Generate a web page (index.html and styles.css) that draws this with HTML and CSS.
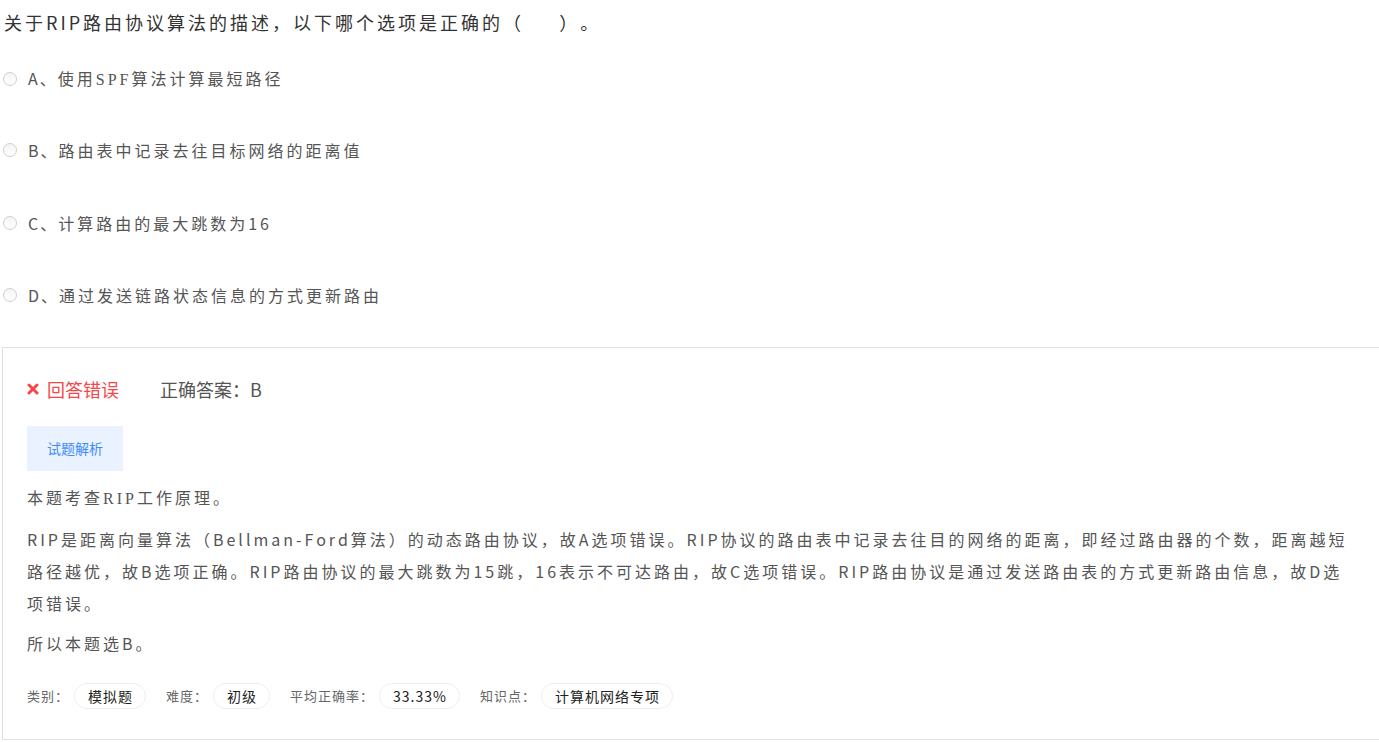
FILE: index.html
```html
<!DOCTYPE html>
<html lang="zh-CN">
<head>
    <meta charset="UTF-8">
    <meta name="viewport" content="width=device-width, initial-scale=1.0">
    <title>试题详情</title>
    <link rel="stylesheet" href="styles.css">
</head>
<body>
    <div class="page">
        <div class="question">关于RIP路由协议算法的描述，以下哪个选项是正确的（&nbsp;&nbsp;&nbsp;&nbsp;&nbsp;）。</div>

        <ul class="options">
            <li class="option"><span class="radio"></span><span class="option-text"><span class="option-key">A、</span>使用<span class="serif">SPF</span>算法计算最短路径</span></li>
            <li class="option"><span class="radio"></span><span class="option-text"><span class="option-key">B、</span>路由表中记录去往目标网络的距离值</span></li>
            <li class="option"><span class="radio"></span><span class="option-text"><span class="option-key">C、</span>计算路由的最大跳数为16</span></li>
            <li class="option"><span class="radio"></span><span class="option-text"><span class="option-key">D、</span>通过发送链路状态信息的方式更新路由</span></li>
        </ul>

        <div class="panel">
            <div class="result">
                <span class="wrong">
                    <svg class="wrong-icon" width="12" height="12" viewBox="0 0 12 12">
                        <path d="M2 2 L10 10 M10 2 L2 10" stroke="#f5474a" stroke-width="3" stroke-linecap="round"/>
                    </svg>
                    回答错误
                </span>
                <span class="answer">正确答案：B</span>
            </div>

            <div class="tabs">
                <span class="tab">试题解析</span>
            </div>

            <div class="analysis">
                <p>本题考查<span class="serif">RIP</span>工作原理。</p>
                <p>RIP是距离向量算法（Bellman-Ford算法）的动态路由协议，故A选项错误。RIP协议的路由表中记录去往目的网络的距离，即经过路由器的个数，距离越短路径越优，故B选项正确。RIP路由协议的最大跳数为15跳，16表示不可达路由，故C选项错误。RIP路由协议是通过发送路由表的方式更新路由信息，故D选项错误。</p>
                <p>所以本题选B。</p>
            </div>

            <div class="meta">
                <span class="meta-label">类别：</span><span class="pill">模拟题</span>
                <span class="meta-label">难度：</span><span class="pill">初级</span>
                <span class="meta-label">平均正确率：</span><span class="pill">33.33%</span>
                <span class="meta-label">知识点：</span><span class="pill">计算机网络专项</span>
            </div>
        </div>
    </div>
</body>
</html>
```

FILE: styles.css
```css
html, body {
    margin: 0;
    padding: 0;
    background-color: #FFFFFF;
}

body {
    font-family: "Noto Sans CJK SC", "Noto Sans", sans-serif;
    color: #555555;
    text-spacing-trim: space-all;
}

.page {
    padding-left: 2px;
}

.serif {
    font-family: "Liberation Serif", "Noto Sans CJK SC", serif;
}

.question {
    height: 44px;
    line-height: 44px;
    padding-left: 2px;
    font-size: 18px;
    letter-spacing: 3px;
    color: #333333;
}

.options {
    list-style: none;
    margin: 0;
    padding: 0;
}

.option {
    height: 72.5px;
    display: flex;
    align-items: center;
    box-sizing: border-box;
}

.option:first-child {
    height: 70px;
}

.radio {
    width: 12px;
    height: 12px;
    border: 1px solid #cfcfcf;
    border-radius: 50%;
    background: linear-gradient(#f4f4f4, #ffffff);
    margin-left: 1px;
    margin-right: 11px;
    flex-shrink: 0;
}

.option-text {
    font-size: 16px;
    line-height: 24px;
    letter-spacing: 3px;
    color: #555555;
}

.option-key {
    letter-spacing: 2px;
}

.panel {
    margin-top: 15px;
    border: 1px solid #e0e0e0;
    border-right: none;
    padding: 29px 20px 30px 24px;
}

.result {
    display: flex;
    align-items: center;
    height: 24px;
    font-size: 18px;
}

.wrong {
    display: flex;
    align-items: center;
    color: #f5474a;
    width: 133px;
}

.wrong-icon {
    margin-right: 8px;
}

.answer {
    color: #555555;
}

.tabs {
    margin-top: 25px;
    display: flex;
}

.tab {
    height: 45px;
    line-height: 45px;
    padding: 0 20px;
    font-size: 14px;
    color: #3d8bff;
    background-color: #ebf2ff;
}

.analysis {
    margin-top: 10px;
}

.analysis p {
    margin: 0 0 8px 0;
    font-size: 16px;
    line-height: 32px;
    letter-spacing: 3px;
    color: #555555;
}

.meta {
    margin-top: 24px;
    display: flex;
    align-items: center;
    height: 26px;
}

.meta-label {
    font-size: 13px;
    letter-spacing: 1px;
    color: #666666;
    margin-right: 5px;
}

.pill {
    height: 24px;
    line-height: 24px;
    padding: 0 12px 0 13px;
    border: 1px solid #eeeeee;
    border-radius: 13px;
    font-size: 14px;
    letter-spacing: 1px;
    color: #222222;
    margin-right: 20px;
}
```
